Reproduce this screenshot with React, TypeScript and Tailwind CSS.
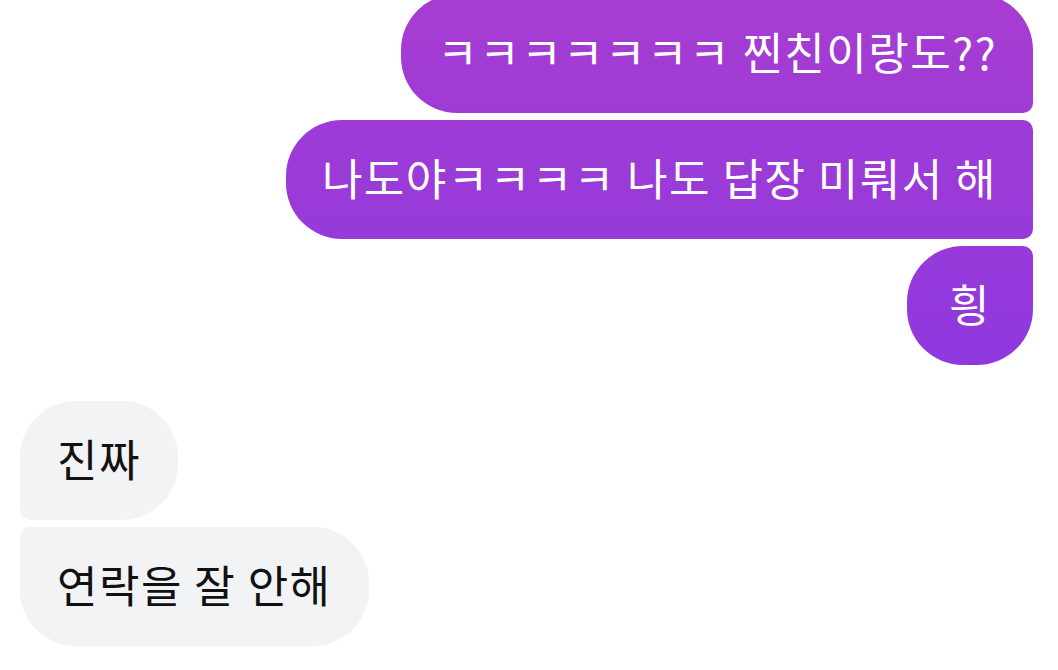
const sent = [
  { text: "ㅋㅋㅋㅋㅋㅋㅋ 찐친이랑도??", shape: "rounded-l-[56px] rounded-tr-[56px] rounded-br-[10px] -mt-[6px] px-[36px]" },
  { text: "나도야ㅋㅋㅋㅋ 나도 답장 미뤄서 해", shape: "rounded-l-[56px] rounded-r-[10px] px-[36px]" },
  { text: "힁", shape: "rounded-l-[56px] rounded-tr-[10px] rounded-br-[56px] px-[42px]" },
];

const received = [
  { text: "진짜", shape: "rounded-r-[56px] rounded-tl-[56px] rounded-bl-[10px]" },
  { text: "연락을 잘 안해", shape: "rounded-r-[56px] rounded-tl-[10px] rounded-bl-[56px]" },
];

export default function App() {
  return (
    <div className="h-[670px] w-[1058px] overflow-hidden bg-white font-['Noto_Sans_CJK_KR','Noto_Sans',sans-serif]">
      <div className="flex flex-col items-end gap-[7px] pr-[25px]">
        {sent.map((m) => (
          <div
            key={m.text}
            className={`flex h-[119px] items-center bg-[linear-gradient(to_bottom,#a73cd2_0px,#9a3bd8_180px,#8f38df_370px,#8a37e2_670px)] bg-fixed pb-[5px] text-[44px] leading-none tracking-[1.5px] whitespace-nowrap text-white ${m.shape}`}
          >
            {m.text}
          </div>
        ))}
      </div>
      <div className="mt-[36px] flex flex-col items-start gap-[7px] pl-[20px]">
        {received.map((m) => (
          <div
            key={m.text}
            className={`flex h-[119px] items-center bg-[#f2f3f5] px-[37px] pb-[5px] text-[44px] leading-none tracking-[1.5px] whitespace-nowrap text-[#111111] ${m.shape}`}
          >
            {m.text}
          </div>
        ))}
      </div>
    </div>
  );
}
